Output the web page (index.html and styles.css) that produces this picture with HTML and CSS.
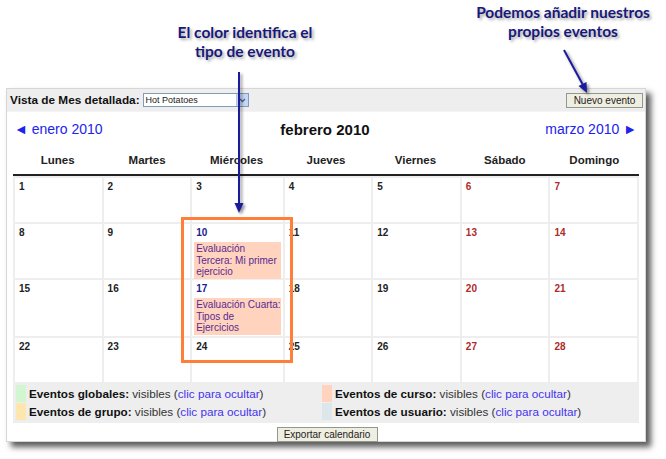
FILE: index.html
```html
<!DOCTYPE html>
<html lang="es">
<head>
<meta charset="utf-8">
<title>Calendario</title>
<link rel="stylesheet" href="styles.css">
</head>
<body>
<div class="page">
  <div class="annot-area">
    <div class="note note-left">El color identifica el<br>tipo de evento</div>
    <div class="note note-right">Podemos añadir nuestros<br>propios eventos</div>
  </div>

  <div class="panel">
    <div class="toolbar">
      <div class="view">
        <span class="view-label">Vista de Mes detallada:</span>
        <span class="select"><span class="select-text">Hot Potatoes</span><span class="select-btn"><svg width="7" height="5" viewBox="0 0 7 5"><path d="M1 1 L3.5 3.5 L6 1" fill="none" stroke="#4d6185" stroke-width="1.3"/></svg></span></span>
      </div>
      <span class="btn">Nuevo evento</span>
    </div>

    <div class="nav">
      <a class="nav-link">◄ enero 2010</a>
      <span class="nav-current">febrero 2010</span>
      <a class="nav-link">marzo 2010 ►</a>
    </div>

    <div class="weekdays">
      <span>Lunes</span><span>Martes</span><span>Miércoles</span><span>Jueves</span><span>Viernes</span><span>Sábado</span><span>Domingo</span>
    </div>

    <div class="cal">
      <div class="cell"><span class="num">1</span></div>
      <div class="cell"><span class="num">2</span></div>
      <div class="cell"><span class="num">3</span></div>
      <div class="cell"><span class="num">4</span></div>
      <div class="cell"><span class="num">5</span></div>
      <div class="cell"><span class="num we">6</span></div>
      <div class="cell"><span class="num we">7</span></div>

      <div class="cell"><span class="num">8</span></div>
      <div class="cell"><span class="num">9</span></div>
      <div class="cell"><span class="num ev">10</span><div class="event">Evaluación<br>Tercera: Mi primer<br>ejercicio</div></div>
      <div class="cell"><span class="num">11</span></div>
      <div class="cell"><span class="num">12</span></div>
      <div class="cell"><span class="num we">13</span></div>
      <div class="cell"><span class="num we">14</span></div>

      <div class="cell"><span class="num">15</span></div>
      <div class="cell"><span class="num">16</span></div>
      <div class="cell"><span class="num ev">17</span><div class="event">Evaluación Cuarta:<br>Tipos de<br>Ejercicios</div></div>
      <div class="cell"><span class="num">18</span></div>
      <div class="cell"><span class="num">19</span></div>
      <div class="cell"><span class="num we">20</span></div>
      <div class="cell"><span class="num we">21</span></div>

      <div class="cell"><span class="num">22</span></div>
      <div class="cell"><span class="num">23</span></div>
      <div class="cell"><span class="num">24</span></div>
      <div class="cell"><span class="num">25</span></div>
      <div class="cell"><span class="num">26</span></div>
      <div class="cell"><span class="num we">27</span></div>
      <div class="cell"><span class="num we">28</span></div>
    </div>

    <div class="legend">
      <div class="leg"><span class="sw sw-global"></span><b>Eventos globales:</b>&nbsp;visibles (<a>clic para ocultar</a>)</div>
      <div class="leg"><span class="sw sw-course"></span><b>Eventos de curso:</b>&nbsp;visibles (<a>clic para ocultar</a>)</div>
      <div class="leg"><span class="sw sw-group"></span><b>Eventos de grupo:</b>&nbsp;visibles (<a>clic para ocultar</a>)</div>
      <div class="leg"><span class="sw sw-user"></span><b>Eventos de usuario:</b>&nbsp;visibles (<a>clic para ocultar</a>)</div>
    </div>

    <div class="export"><span class="btn">Exportar calendario</span></div>
  </div>

  <div class="highlight"></div>

  <svg class="arrows" width="666" height="459" viewBox="0 0 666 459">
    <defs>
      <filter id="sh" x="-50%" y="-50%" width="200%" height="200%">
        <feGaussianBlur in="SourceAlpha" stdDeviation="1.5"/>
        <feOffset dx="2" dy="2" result="b"/>
        <feComponentTransfer><feFuncA type="linear" slope="0.45"/></feComponentTransfer>
        <feMerge><feMergeNode/><feMergeNode in="SourceGraphic"/></feMerge>
      </filter>
    </defs>
    <g filter="url(#sh)" stroke="#1c1c9a" fill="#1c1c9a">
      <line x1="239" y1="72" x2="239" y2="205" stroke-width="2"/>
      <path d="M234.5 203 L243.5 203 L239 213 Z" stroke="none"/>
      <line x1="564" y1="50" x2="583" y2="85" stroke-width="2"/>
      <path d="M578.5 86 L586.5 82 L587 93 Z" stroke="none"/>
    </g>
  </svg>
</div>
</body>
</html>
```

FILE: styles.css
```css
* { box-sizing: border-box; }

html, body {
  margin: 0;
  padding: 0;
  background: #ffffff;
}

.page {
  position: relative;
  width: 666px;
  height: 459px;
  font-family: "Liberation Sans", Arial, sans-serif;
  color: #222;
}

.annot-area {
  height: 88px;
}

.note {
  position: absolute;
  font-family: Lato, "Open Sans", sans-serif;
  font-weight: 700;
  font-size: 15.5px;
  line-height: 19px;
  color: #18187a;
  text-align: center;
  text-shadow: 2px 2px 3px rgba(0, 0, 0, 0.35);
  white-space: nowrap;
}

.note-left {
  left: 160px;
  top: 23px;
  width: 170px;
}

.note-right {
  left: 458px;
  top: 3px;
  width: 210px;
}

.panel {
  margin-left: 6px;
  width: 640px;
  height: 354px;
  background: #fff;
  border: 1px solid #d6d6d6;
  box-shadow: 5px 5px 6px rgba(0, 0, 0, 0.65);
}

.toolbar {
  height: 23px;
  background: #eeeeee;
  border-bottom: 1px solid #f4f4f4;
  display: flex;
  align-items: center;
  justify-content: space-between;
  padding: 0 2px 0 3px;
}

.view {
  display: flex;
  align-items: center;
  gap: 3px;
}

.view-label {
  font-weight: 700;
  font-size: 11.8px;
  color: #111;
}

.select {
  display: flex;
  width: 106px;
  height: 14px;
  border: 1px solid #7f9db9;
  background: #fff;
}

.select-text {
  flex: 1;
  font-size: 9px;
  line-height: 12px;
  padding-left: 2px;
  color: #222;
}

.select-btn {
  width: 12px;
  background: #c6d6f6;
  border-left: 1px solid #b5c6e6;
  display: flex;
  align-items: center;
  justify-content: center;
}

.btn {
  display: inline-block;
  font-size: 10px;
  line-height: 13px;
  padding: 0 5px;
  background: #f0eee0;
  border: 1px solid #8f9a8f;
  color: #222;
}

.toolbar .btn {
  width: 77px;
  text-align: center;
}

.nav {
  height: 34px;
  display: flex;
  align-items: center;
  justify-content: space-between;
  padding: 0 8px 0 7px;
}

.nav-link {
  color: #2222ee;
  font-size: 14px;
}

.nav-current {
  font-weight: 700;
  font-size: 15px;
  color: #111;
  margin-left: 2px;
}

.weekdays {
  height: 28px;
  margin: 0 6px;
  display: grid;
  grid-template-columns: repeat(7, 1fr);
  align-items: center;
  text-align: center;
  font-weight: 700;
  font-size: 11.5px;
  color: #222;
}

.cal {
  margin: 0 6px;
  border-top: 2px solid #222;
  background: #eeeeee;
  padding: 2px 2px 0 2px;
  display: grid;
  grid-template-columns: repeat(7, 1fr);
  grid-template-rows: 44px 54px 56px 44px;
  gap: 2px;
}

.cell {
  background: #fff;
  padding: 3px 2px 0 2px;
}

.num {
  display: block;
  font-weight: 700;
  font-size: 10px;
  line-height: 12px;
  color: #222;
  padding-left: 2px;
}

.num.we { color: #b02a2a; }
.num.ev { color: #20208a; }

.event {
  margin-top: 3px;
  background: #ffd3bd;
  color: #5a2a92;
  font-size: 10px;
  line-height: 11.5px;
  padding: 1px 0 1px 2px;
  white-space: nowrap;
  overflow: hidden;
}

.legend {
  margin: 0 6px;
  height: 41px;
  background: #eeeeee;
  display: grid;
  grid-template-columns: 306px 1fr;
  align-content: center;
  padding-left: 3px;
}

.leg {
  display: flex;
  align-items: center;
  height: 18px;
  font-size: 11.7px;
  color: #333;
  white-space: nowrap;
}

.leg b {
  color: #111;
}

.leg a {
  color: #4433ee;
}

.sw {
  width: 10px;
  height: 17px;
  margin-right: 3px;
}

.sw-global { background: #d2f5d2; }
.sw-course { background: #ffd3bd; }
.sw-group { background: #fee7ae; }
.sw-user { background: #dce7ec; }

.export {
  display: flex;
  justify-content: center;
  padding-top: 4px;
  padding-left: 2px;
}

.export .btn {
  width: 101px;
  text-align: center;
  padding: 0;
}

.highlight {
  position: absolute;
  left: 181px;
  top: 217px;
  width: 112px;
  height: 146px;
  border: 3.5px solid #ff7f3a;
}

.arrows {
  position: absolute;
  left: 0;
  top: 0;
  pointer-events: none;
}
```
